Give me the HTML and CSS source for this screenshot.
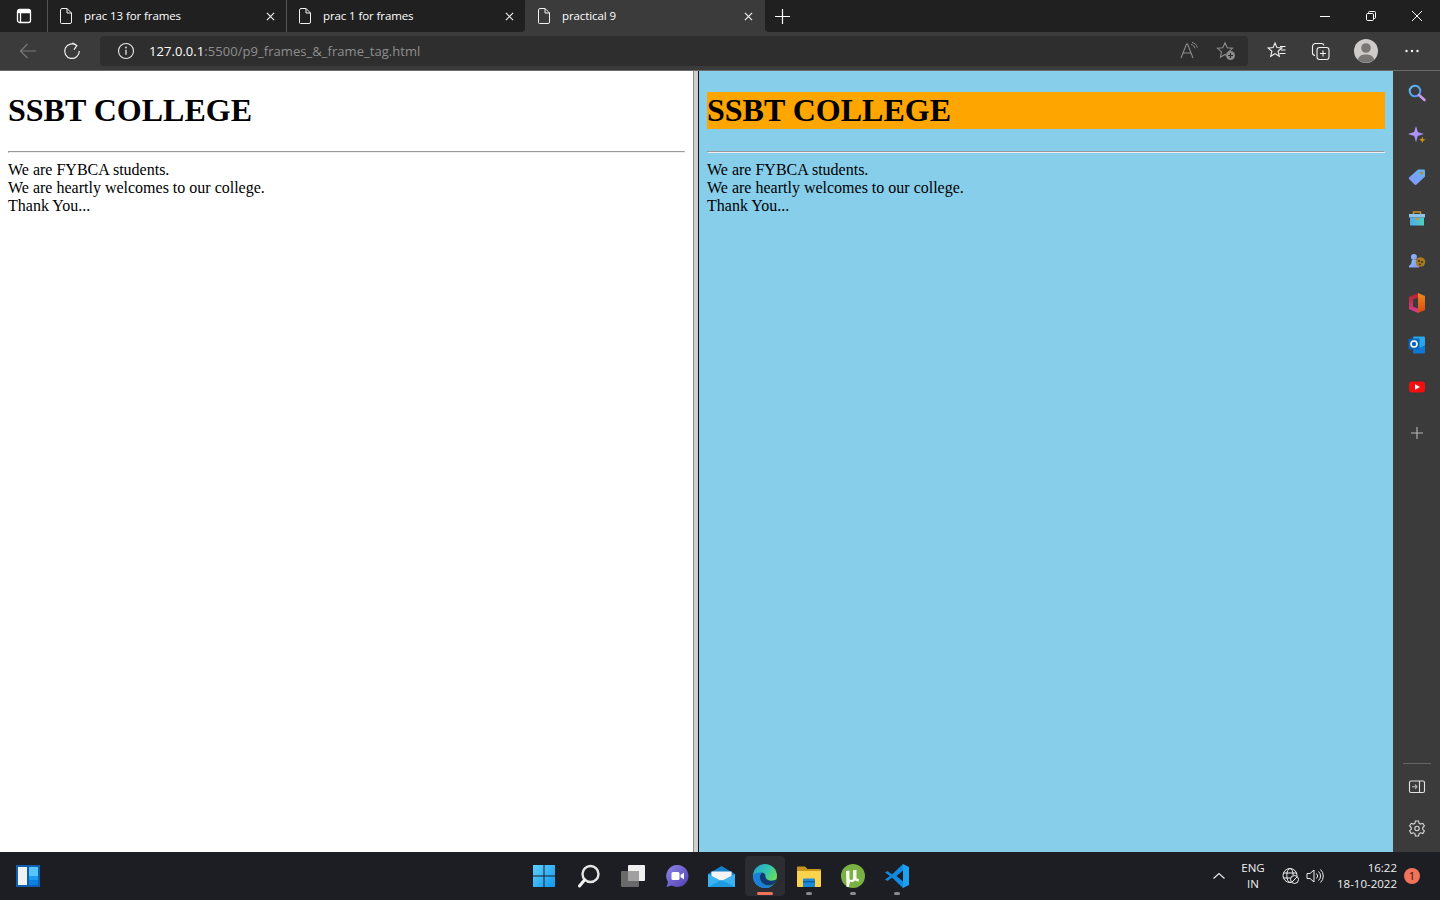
FILE: index.html
```html
<!DOCTYPE html>
<html lang="en">
<head>
<meta charset="utf-8">
<title>practical 9</title>
<link rel="stylesheet" href="styles.css">
</head>
<body>
<div class="window">
  <header class="tabbar">
    <div class="strip strip-left">
      <div class="tabactions">
        <svg class="ico16" viewBox="0 0 16 16"><rect x="1.5" y="1.5" width="13" height="13" rx="2" fill="none" stroke="#fff" stroke-width="1.3"/><path d="M1.5 4.5h13M4.5 4.5v10" stroke="#fff" stroke-width="1.3" fill="none"/><path d="M2 2h12v2.500H2z" fill="#fff"/></svg>
      </div>
      <div class="tab sep">
        <svg class="doc" viewBox="0 0 12 16"><path d="M1.500.5h5.500l4.500 4.500v9a1.500 1.500 0 0 1-1.500 1.500h-8.500a1 1 0 0 1-1-1v-12.500a1 1 0 0 1 1-1z M7 .5v4.500h4.500" fill="none" stroke="#f2f2f2" stroke-width="1"/></svg>
        <span class="tabtitle">prac 13 for frames</span>
        <svg class="close" viewBox="0 0 10 10"><path d="M1 1l8 8M9 1l-8 8" stroke="#eee" stroke-width="1.300"/></svg>
      </div>
      <div class="tab">
        <svg class="doc" viewBox="0 0 12 16"><path d="M1.500.5h5.500l4.500 4.500v9a1.500 1.500 0 0 1-1.500 1.500h-8.500a1 1 0 0 1-1-1v-12.500a1 1 0 0 1 1-1z M7 .5v4.500h4.500" fill="none" stroke="#f2f2f2" stroke-width="1"/></svg>
        <span class="tabtitle">prac 1 for frames</span>
        <svg class="close" viewBox="0 0 10 10"><path d="M1 1l8 8M9 1l-8 8" stroke="#eee" stroke-width="1.300"/></svg>
      </div>
    </div>
    <div class="tab tab-active">
      <svg class="doc" viewBox="0 0 12 16"><path d="M1.500.5h5.500l4.500 4.500v9a1.500 1.500 0 0 1-1.500 1.500h-8.500a1 1 0 0 1-1-1v-12.500a1 1 0 0 1 1-1z M7 .5v4.500h4.500" fill="none" stroke="#f2f2f2" stroke-width="1"/></svg>
      <span class="tabtitle">practical 9</span>
      <svg class="close" viewBox="0 0 10 10"><path d="M1 1l8 8M9 1l-8 8" stroke="#eee" stroke-width="1.300"/></svg>
    </div>
    <div class="strip strip-right">
      <svg class="newtab" viewBox="0 0 15 15"><path d="M7.500 0v15M0 7.500h15" stroke="#fff" stroke-width="1.200"/></svg>
      <div class="winctl">
        <div class="winbtn"><svg class="ico10" viewBox="0 0 10 10"><path d="M0 5.500h10" stroke="#fff" stroke-width="1"/></svg></div>
        <div class="winbtn"><svg class="ico10" viewBox="0 0 10 10"><path d="M2.500 2V1.500a1 1 0 0 1 1-1h5a1 1 0 0 1 1 1v5a1 1 0 0 1-1 1H8" fill="none" stroke="#fff"/><rect x=".5" y="2.500" width="7" height="7" rx="1.200" fill="none" stroke="#fff"/></svg></div>
        <div class="winbtn"><svg class="ico10" viewBox="0 0 10 10"><path d="M0 0l10 10M10 0L0 10" stroke="#fff" stroke-width="1"/></svg></div>
      </div>
    </div>
  </header>

  <nav class="toolbar">
    <div class="navbtn">
      <svg class="ico18" viewBox="0 0 18 18"><path d="M17 9H1.500M8.500 2L1.500 9l7 7" fill="none" stroke="#787878" stroke-width="1.200"/></svg>
    </div>
    <div class="navbtn">
      <svg class="ico18" viewBox="0 0 18 18"><path d="M13.500 3.400A7.300 7.300 0 1 0 16.300 9" fill="none" stroke="#f0f0f0" stroke-width="1.200"/><path d="M9.500.8l4.300 2.800-2.800 4" fill="none" stroke="#f0f0f0" stroke-width="1.200"/></svg>
    </div>
    <div class="addressbar">
      <svg class="ico18 info" viewBox="0 0 18 18"><circle cx="9" cy="9" r="7.500" fill="none" stroke="#e8e8e8" stroke-width="1.100"/><path d="M9 7.800v5" stroke="#e8e8e8" stroke-width="1.300"/><circle cx="9" cy="5.500" r=".9" fill="#e8e8e8"/></svg>
      <span class="url"><span class="host">127.0.0.1</span>:5500/p9_frames_&amp;_frame_tag.html</span>
      <div class="addr-actions">
        <svg class="ico20" viewBox="0 0 20 20"><path d="M2 17L7.500 3h1L14 17M4 12h8.500" fill="none" stroke="#8c8c8c" stroke-width="1.100"/><path d="M12 3.500c2 .4 3.500 1.800 4 3.800M13 1.500c2.700.4 4.700 2.400 5.300 5" fill="none" stroke="#8c8c8c" stroke-width="1"/></svg>
        <svg class="ico20" viewBox="0 0 20 20"><path d="M9 1.800l2.200 5 5.300.5-4 3.600 1.100 5.300L9 13.500l-4.600 2.700 1.100-5.300-4-3.600 5.300-.5z" fill="none" stroke="#8c8c8c" stroke-width="1.100"/><circle cx="14.500" cy="14.500" r="4.500" fill="#8c8c8c"/><path d="M14.500 12v5M12 14.500h5" stroke="#2e2e2e" stroke-width="1.200"/></svg>
      </div>
    </div>
    <div class="tools">
      <svg class="ico20 tool-fav" viewBox="0 0 20 20"><path d="M8 2l1.900 4.600 5 .4-3.800 3.300 1.200 5-4.300-2.700-4.300 2.700 1.200-5L1.100 7l5-.4z" fill="none" stroke="#f2f2f2" stroke-width="1.100"/><path d="M13 5.500h5.500M14 9h4.500M12.500 12.500h6" stroke="#f2f2f2" stroke-width="1.100"/></svg>
      <svg class="ico20 tool-coll" viewBox="0 0 20 20"><path d="M4 14.500c-1.500-.2-2.500-1.200-2.500-2.500V5.500a3 3 0 0 1 3-3h6c1.300 0 2.200.7 2.500 2" fill="none" stroke="#f2f2f2" stroke-width="1.100"/><rect x="6" y="6.500" width="12" height="12" rx="2.500" fill="none" stroke="#f2f2f2" stroke-width="1.100"/><path d="M12 9.500v6M9 12.500h6" stroke="#f2f2f2" stroke-width="1.100"/></svg>
      <div class="avatar"><svg class="ico24" viewBox="0 0 24 24"><circle cx="12" cy="12" r="12" fill="#cfcbc8"/><circle cx="12" cy="9" r="4.800" fill="#7a7674"/><path d="M3.800 20.500C5 16.800 8 15.500 12 15.500s7 1.300 8.200 5A12 12 0 0 1 3.800 20.500z" fill="#7a7674"/></svg></div>
      <svg class="ico16 tool-more" viewBox="0 0 16 16"><circle cx="2.500" cy="8" r="1.200" fill="#f2f2f2"/><circle cx="8" cy="8" r="1.200" fill="#f2f2f2"/><circle cx="13.500" cy="8" r="1.200" fill="#f2f2f2"/></svg>
    </div>
  </nav>

  <main class="content">
    <section class="frame frame-plain">
      <h1>SSBT COLLEGE</h1>
      <hr>
      We are FYBCA students.<br>
      We are heartly welcomes to our college.<br>
      Thank You...
    </section>
    <div class="divider"></div>
    <section class="frame frame-blue">
      <h1 class="hl">SSBT COLLEGE</h1>
      <hr>
      We are FYBCA students.<br>
      We are heartly welcomes to our college.<br>
      Thank You...
    </section>
    <aside class="sidebar">
      <div class="sb-item"><svg class="ico20" viewBox="0 0 20 20"><defs><linearGradient id="sbg" x1="0" y1="0" x2="1" y2="1"><stop offset="0" stop-color="#5fc3f5"/><stop offset="1" stop-color="#4f8df5"/></linearGradient></defs><circle cx="8" cy="8" r="5.300" fill="none" stroke="url(#sbg)" stroke-width="2"/><path d="M12 12l5.500 5" stroke="#c79be8" stroke-width="2.600" stroke-linecap="round"/></svg></div>
      <div class="sb-item"><svg class="ico20" viewBox="0 0 20 20"><defs><linearGradient id="sp" x1="0" y1="0" x2="1" y2="1"><stop offset="0" stop-color="#c9a3f7"/><stop offset="1" stop-color="#8f7df7"/></linearGradient></defs><path d="M9 1l1.800 6 6.200 2-6.200 2L9 17.500 7.200 11 1 9l6.200-2z" fill="url(#sp)"/><path d="M15.300 11.500l.9 2.400 2.400.9-2.400.9-.9 2.400-.9-2.400-2.400-.9 2.400-.9z" fill="#d9960f"/></svg></div>
      <div class="sb-item"><svg class="ico20" viewBox="0 0 20 20"><defs><linearGradient id="tg" x1="0" y1="1" x2="1" y2="0"><stop offset="0" stop-color="#8f93f7"/><stop offset="1" stop-color="#5cb5f5"/></linearGradient></defs><path d="M11 2.500h6a1 1 0 0 1 1 1v6L9.500 17.500a1.500 1.500 0 0 1-2 0L2.300 12.300a1.500 1.500 0 0 1 0-2z" fill="url(#tg)"/><circle cx="14.500" cy="6" r="1.500" fill="#c8860f"/></svg></div>
      <div class="sb-item"><svg class="ico20" viewBox="0 0 20 20"><defs><linearGradient id="br" x1="0" y1="0" x2="1" y2="0"><stop offset="0" stop-color="#53a9e8"/><stop offset="1" stop-color="#4fd0c0"/></linearGradient></defs><path d="M6.500 5.500V3h7v2.500" fill="none" stroke="#c6922a" stroke-width="1.500"/><rect x="2" y="5" width="16" height="3.500" fill="#8ec3ee"/><rect x="3" y="8.500" width="14" height="8" fill="url(#br)"/><circle cx="10" cy="10" r="1.300" fill="#d8951b"/></svg></div>
      <div class="sb-item"><svg class="ico20" viewBox="0 0 20 20"><defs><linearGradient id="pn" x1="0" y1="0" x2="1" y2="1"><stop offset="0" stop-color="#86c8fa"/><stop offset="1" stop-color="#8e8cf5"/></linearGradient></defs><circle cx="7" cy="6" r="3" fill="url(#pn)"/><path d="M5 9h4l1 4 2 2v1.500H2V15l2-2z" fill="url(#pn)"/><circle cx="13.500" cy="11" r="4.800" fill="#a87a20"/><circle cx="12" cy="10" r="1" fill="#3d2a0c"/><circle cx="15" cy="11" r="1" fill="#3d2a0c"/><circle cx="13" cy="13.300" r=".9" fill="#3d2a0c"/></svg></div>
      <div class="sb-item"><svg class="ico20" viewBox="0 0 20 20"><defs><linearGradient id="of" x1="0" y1="0" x2="0" y2="1"><stop offset="0" stop-color="#b3202c"/><stop offset="1" stop-color="#d9408f"/></linearGradient><linearGradient id="of2" x1="0" y1="0" x2="0" y2="1"><stop offset="0" stop-color="#f08a1d"/><stop offset="1" stop-color="#d9480f"/></linearGradient></defs><path d="M11 0L2 4v12l9 4z" fill="url(#of)"/><path d="M11 0l7 3v14l-7 3z" fill="url(#of2)"/><path d="M6 6l5-1v10.500l-5-2z" fill="#3b3b3b"/></svg></div>
      <div class="sb-item"><svg class="ico20" viewBox="0 0 20 20"><rect x="6" y="1.500" width="12" height="15" rx="1" fill="#28a8ea"/><path d="M6 10l6 3.500 6-3.500v7.500a1 1 0 0 1-1 1H7a1 1 0 0 1-1-1z" fill="#0f78d4"/><rect x="1.500" y="3.500" width="11" height="11" rx="1" fill="#0a64b8"/><circle cx="7" cy="9" r="3" fill="none" stroke="#fff" stroke-width="1.600"/></svg></div>
      <div class="sb-item"><svg class="ico20" viewBox="0 0 20 20"><rect x="2" y="4.500" width="16" height="11" rx="3" fill="#f40f0f"/><path d="M8 7.300l5 2.700-5 2.700z" fill="#fff"/></svg></div>
      <div class="sb-item sb-plus"><svg class="ico14" viewBox="0 0 14 14"><path d="M7 1v12M1 7h12" stroke="#b8b8b8" stroke-width="1.100"/></svg></div>
      <div class="sb-spacer"></div>
      <div class="sb-line"></div>
      <div class="sb-item"><svg class="ico18" viewBox="0 0 18 18"><rect x="1.500" y="3" width="15" height="11.500" rx="1.500" fill="none" stroke="#e2e2e2" stroke-width="1.100"/><path d="M11.500 3v11.500" stroke="#e2e2e2" stroke-width="1.100"/><path d="M4 8.700h4.500M7 6.500l2 2.200-2 2.200" fill="none" stroke="#a8a8a8" stroke-width="1.300"/></svg></div>
      <div class="sb-item"><svg class="ico18" viewBox="0 0 18 18"><path d="M7.400 1h3.200l.5 2.300 1.500.8 2.200-.8 1.600 2.700-1.700 1.600v1.700l1.700 1.600-1.600 2.700-2.200-.8-1.500.8-.5 2.400H7.400l-.5-2.400-1.500-.8-2.200.8-1.600-2.700 1.700-1.600V7.600L1.600 6l1.600-2.700 2.200.8 1.500-.8z" fill="none" stroke="#d8d8d8" stroke-width="1.100"/><circle cx="9" cy="8.500" r="2.200" fill="none" stroke="#d8d8d8" stroke-width="1.100"/></svg></div>
    </aside>
  </main>

  <footer class="taskbar">
    <div class="tb-left">
      <svg class="ico24" viewBox="0 0 24 24"><rect width="24" height="22" y="1" fill="#0f5fb0"/><rect x="2" y="3" width="9" height="18" fill="#f2f2f2"/><rect x="13" y="3" width="9" height="9" fill="#58c5fb"/><rect x="13" y="12" width="9" height="4" fill="#1e9bf0"/><rect x="13" y="16" width="9" height="5" fill="#0d7fe0"/></svg>
    </div>
    <div class="tb-center">
      <div class="tb-item tb-start"><svg class="ico24" viewBox="0 0 24 24"><defs><linearGradient id="win" x1="0" y1="0" x2="1" y2="1"><stop offset="0" stop-color="#5fd0fb"/><stop offset="1" stop-color="#1197f0"/></linearGradient></defs><path d="M1 1h10.500v10.500H1zM12.500 1H23v10.500H12.500zM1 12.500h10.500V23H1zM12.500 12.500H23V23H12.500z" fill="url(#win)"/></svg></div>
      <div class="tb-item"><svg class="ico24" viewBox="0 0 24 24"><circle cx="13.500" cy="10" r="8" fill="none" stroke="#e6e6e6" stroke-width="2.400"/><path d="M7.500 16L2.500 22" stroke="#f4f4f4" stroke-width="3" stroke-linecap="round"/></svg></div>
      <div class="tb-item"><svg class="ico24" viewBox="0 0 24 24"><rect x="7" y="1" width="17" height="16" rx="1" fill="#f0f0f0"/><rect x="0" y="7" width="18" height="16" rx="1" fill="#6a6a6a"/><rect x="7" y="7" width="11" height="10" fill="#a0a0a0"/></svg></div>
      <div class="tb-item"><svg class="ico24" viewBox="0 0 24 24"><defs><linearGradient id="tm" x1="0" y1="0" x2="1" y2="1"><stop offset="0" stop-color="#8f86ea"/><stop offset="1" stop-color="#4f3fb0"/></linearGradient></defs><path d="M12.500 1a11 11 0 1 1-5.600 20.500L1.500 23l1.500-5A11 11 0 0 1 12.500 1z" fill="url(#tm)"/><rect x="6.500" y="8" width="8" height="8" rx="1.500" fill="#fff"/><path d="M15.500 11l3.500-2.500v7L15.500 13z" fill="#fff"/></svg></div>
      <div class="tb-item"><svg class="ico-mail" viewBox="0 0 24 24" preserveAspectRatio="none"><path d="M0 10L12 2l12 8v13H0z" fill="#1480c8"/><path d="M3 7.500h18V15l-9 5-9-5z" fill="#f4f4f4"/><path d="M0 10l12 7 12-7v13H0z" fill="#3cb2f0"/><path d="M0 23l12-7 12 7z" fill="#1f9ae0"/></svg></div>
      <div class="tb-item tb-active"><svg class="ico24" viewBox="0 0 24 24"><defs><linearGradient id="eg1" x1="0" y1="0" x2="1" y2=".7"><stop offset="0" stop-color="#1f9fd8"/><stop offset=".55" stop-color="#35c8a8"/><stop offset="1" stop-color="#7be04a"/></linearGradient></defs><circle cx="12" cy="12" r="12" fill="url(#eg1)"/><path d="M0 12A12 12 0 0 0 20.500 20.500c-4 1.500-9 1.500-12-2.500-2.500-3-2-7 .5-9.500C5 8 1 9 0 12z" fill="#1a7fd8"/><path d="M9 8.500c-2.500 2.500-3 6-.5 9.500 3 4 8 4 12 2.500 1.500-1.500 3-3.500 3.500-5.500-3 2-7 2-9 1-2-1-3-3-2.500-4.500C12.500 10.500 11 8.800 9 8.500z" fill="#123a72"/></svg><span class="ind ind-on"></span></div>
      <div class="tb-item"><svg class="ico24" viewBox="0 0 24 24"><path d="M0 3.500a1 1 0 0 1 1-1h7l2.500 2.500H23a1 1 0 0 1 1 1V8H0z" fill="#c8961c"/><path d="M0 7h24v15a1 1 0 0 1-1 1H1a1 1 0 0 1-1-1z" fill="#fbd24c"/><path d="M6 15.500a1 1 0 0 1 1-1h10a1 1 0 0 1 1 1V23H6z" fill="#1a8ad8"/><rect x="6" y="17" width="12" height="1.500" fill="#0d5fa8"/></svg><span class="ind"></span></div>
      <div class="tb-item"><svg class="ico24" viewBox="0 0 24 24"><circle cx="12" cy="12" r="12" fill="#79b142"/><path d="M5 7l3.500-.5v8c0 1.800 2.500 2 3.500.5V6.300l3.500-.5v8.500l2.500 1-.5 2.500-3.500-1.300c-1.500 2-3.500 2-5 1L8 23H5.500z" fill="#f6f8ef"/></svg><span class="ind"></span></div>
      <div class="tb-item"><svg class="ico24" viewBox="0 0 24 24"><path d="M18 0l6 3v18l-6 3z" fill="#1f9ff0"/><path d="M18 6.500L11.500 12 18 17.500V24L7 13.500 2.500 17 0 15.500 5 12 0 8.500 2.500 7 7 10.500 18 0z" fill="#0f8be0"/></svg><span class="ind"></span></div>
    </div>
    <div class="tray">
      <svg class="ico14 chev" viewBox="0 0 14 14"><path d="M1.500 9.500L7 4.500l5.500 5" fill="none" stroke="#e8e8e8" stroke-width="1.200"/></svg>
      <div class="lang"><span>ENG</span><span>IN</span></div>
      <svg class="ico18 tray-globe" viewBox="0 0 18 18"><circle cx="8" cy="8.500" r="7" fill="none" stroke="#eee" stroke-width="1"/><ellipse cx="8" cy="8.500" rx="3.200" ry="7" fill="none" stroke="#eee" stroke-width="1"/><path d="M1.500 6h13M1.500 11h8" stroke="#eee" stroke-width="1"/><circle cx="12.500" cy="12.500" r="4" fill="#1f2025" stroke="#eee" stroke-width="1"/><path d="M10 15l5-5" stroke="#eee" stroke-width="1"/></svg>
      <svg class="ico18 tray-vol" viewBox="0 0 18 18"><path d="M1 6.500h3l4-3.500v12l-4-3.500H1z" fill="none" stroke="#eee" stroke-width="1"/><path d="M10.500 6.500a3.500 3.500 0 0 1 0 5M12.500 4.500a6 6 0 0 1 0 9M14.500 2.500a9 9 0 0 1 0 13" fill="none" stroke="#eee" stroke-width="1"/></svg>
      <div class="clock"><span>16:22</span><span>18-10-2022</span></div>
      <div class="badge">1</div>
    </div>
  </footer>
</div>
</body>
</html>
```
FILE: styles.css
```css
* { box-sizing: border-box; }
html, body { margin: 0; height: 100%; overflow: hidden; }
svg { display: block; flex: none; }
.ico10 { width: 10px; height: 10px; }
.ico14 { width: 14px; height: 14px; }
.ico16 { width: 16px; height: 16px; }
.ico18 { width: 18px; height: 18px; }
.ico20 { width: 20px; height: 20px; }
.ico24 { width: 24px; height: 24px; }
.ico-mail { width: 27px; height: 24px; }

.window { width: 1440px; height: 900px; display: flex; flex-direction: column; }

/* tab strip */
.tabbar { height: 36px; flex: none; display: flex; background: #3b3b3b; font-family: "Open Sans", sans-serif; font-size: 11.500px; color: #fff; }
.strip { height: 32px; background: #202020; display: flex; align-items: center; }
.strip-left { width: 525px; border-bottom-right-radius: 4px; }
.strip-right { flex: 1; border-bottom-left-radius: 4px; padding-left: 10px; }
.tabactions { width: 47px; padding-left: 16px; }
.tab { height: 32px; width: 238px; display: flex; align-items: center; padding-left: 12px; }
.tab.sep { border-left: 1px solid #555; border-right: 1px solid #555; width: 240px; }
.tab-active { width: 240px; height: 36px; background: #3b3b3b; border-radius: 6px 6px 0 0; padding-left: 13px; padding-bottom: 4px; }
.doc { width: 12px; height: 16px; }
.tabtitle { margin-left: 12px; padding-bottom: 2px; flex: 1; white-space: nowrap; letter-spacing: -.1px; }
.close { width: 9px; height: 9px; margin-right: 11px; }
.tab-active .close { margin-right: 12px; }
.newtab { width: 15px; height: 15px; }
.winctl { display: flex; margin-left: auto; }
.winbtn { width: 46px; height: 32px; display: flex; align-items: center; justify-content: center; }

/* toolbar */
.toolbar { height: 35px; flex: none; background: #3b3b3b; display: flex; align-items: flex-start; border-bottom: 1px solid #6a6a6a; }
.navbtn { width: 44px; height: 30px; display: flex; align-items: center; justify-content: center; margin-left: 6px; margin-right: -6px; }
.navbtn + .navbtn { margin-left: 6px; margin-right: 6px; }
.addressbar { width: 1148px; height: 30px; background: #2e2e2e; border-radius: 4px; display: flex; align-items: center; padding-left: 17px; font-family: "Open Sans", sans-serif; }
.url { margin-left: 14px; font-size: 13px; letter-spacing: .05px; color: #8e8e8e; white-space: nowrap; }
.host { color: #fff; }
.addr-actions { margin-left: auto; display: flex; gap: 17px; padding-right: 12px; }
.tools { display: flex; align-items: center; height: 30px; padding-left: 19px; flex: 1; }
.tool-coll { margin-left: 24px; }
.avatar { margin-left: 23px; }
.tool-more { margin-left: 26px; }

/* content */
.content { flex: 1; min-height: 0; display: flex; }
.frame { width: 694px; padding: 21.44px 8px 0; font-family: "Liberation Serif", serif; font-size: 16px; color: #000; }
.frame-plain { width: 693px; background: #fff; }
.frame-blue { background: #87ceeb; }
.frame h1 { margin: 0 0 21.44px; font-size: 32px; font-weight: 700; }
.frame hr { margin: 8px 0; }
.hl { background: #ffa500; }
.divider { width: 6px; background: #cfcfcf; border-right: 1px solid #111; border-left: 1px solid #8a8a8a; }
.sidebar { width: 47px; background: #3b3b3b; display: flex; flex-direction: column; align-items: center; padding: 1px 0 2px; }
.sb-item { height: 42px; width: 47px; display: flex; align-items: center; justify-content: center; }
.sb-plus { margin-top: 4px; }
.sb-spacer { flex: 1; }
.sb-line { width: 28px; height: 1px; background: #666; margin-bottom: 2px; }

/* taskbar */
.taskbar { height: 48px; flex: none; background: #1d1e23; display: grid; grid-template-columns: 523px 396px 1fr; align-items: center; font-family: "Open Sans", sans-serif; font-size: 11.500px; color: #f0f0f0; }
.tb-left { padding-left: 16px; }
.tb-center { display: flex; }
.tb-item { width: 44px; height: 40px; display: flex; align-items: center; justify-content: center; position: relative; border-radius: 4px; }
.tb-start { padding-right: 2px; }
.tb-active { width: 40px; margin: 0 2px; background: #2c2d32; }
.ind { position: absolute; bottom: 1px; left: 19px; width: 6px; height: 3px; border-radius: 2px; background: #8a8a8a; }
.ind-on { left: 12px; width: 16px; background: #f0735a; bottom: 1px; }
.tray { display: flex; align-items: center; padding-left: 293px; }
.lang { width: 40px; margin-left: 7px; display: flex; flex-direction: column; align-items: center; line-height: 16px; }
.tray-globe { margin-left: 9px; }
.tray-vol { margin-left: 6px; }
.clock { width: 67px; margin-left: 6px; display: flex; flex-direction: column; align-items: flex-end; line-height: 16px; }
.badge { width: 16px; height: 16px; margin-left: 7px; border-radius: 50%; background: #f0735a; color: #2a1510; font-size: 11px; line-height: 16px; text-align: center; }
```
